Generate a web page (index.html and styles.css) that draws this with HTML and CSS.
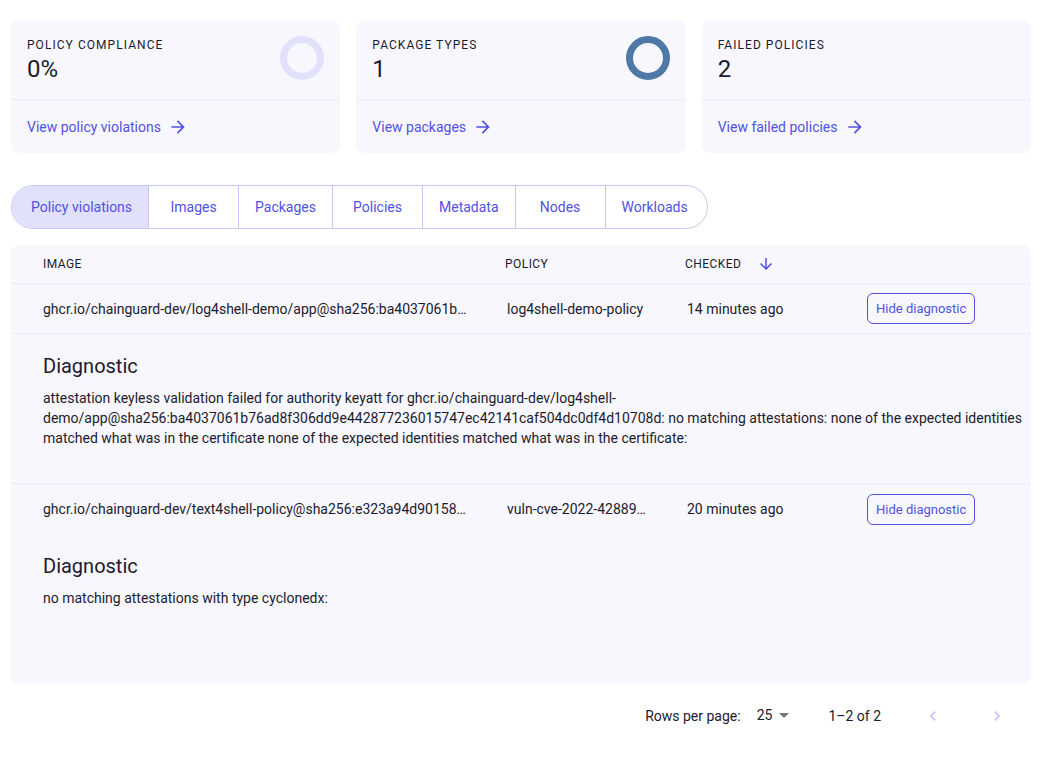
FILE: index.html
```html
<!DOCTYPE html>
<html>
<head>
<meta charset="utf-8">
<link rel="stylesheet" href="styles.css">
</head>
<body>
<div class="page">
  <div class="cards">
    <div class="card">
      <div class="card-top">
        <div>
          <div class="card-label">POLICY COMPLIANCE</div>
          <div class="card-value">0%</div>
        </div>
        <svg class="donut" width="44" height="44" viewBox="0 0 44 44"><circle cx="22" cy="22" r="18.5" fill="none" stroke="#e1e1fc" stroke-width="7"/></svg>
      </div>
      <div class="card-foot">
        <a class="card-link">View policy violations <svg class="arrow" width="20" height="20" viewBox="0 0 24 24"><path d="M12 4l-1.41 1.41L16.17 11H4v2h12.17l-5.58 5.59L12 20l8-8z"/></svg></a>
      </div>
    </div>
    <div class="card">
      <div class="card-top">
        <div>
          <div class="card-label">PACKAGE TYPES</div>
          <div class="card-value">1</div>
        </div>
        <svg class="donut" width="44" height="44" viewBox="0 0 44 44"><circle cx="22" cy="22" r="18.5" fill="none" stroke="#4e79a7" stroke-width="7"/></svg>
      </div>
      <div class="card-foot">
        <a class="card-link">View packages <svg class="arrow" width="20" height="20" viewBox="0 0 24 24"><path d="M12 4l-1.41 1.41L16.17 11H4v2h12.17l-5.58 5.59L12 20l8-8z"/></svg></a>
      </div>
    </div>
    <div class="card">
      <div class="card-top">
        <div>
          <div class="card-label">FAILED POLICIES</div>
          <div class="card-value">2</div>
        </div>
      </div>
      <div class="card-foot">
        <a class="card-link">View failed policies <svg class="arrow" width="20" height="20" viewBox="0 0 24 24"><path d="M12 4l-1.41 1.41L16.17 11H4v2h12.17l-5.58 5.59L12 20l8-8z"/></svg></a>
      </div>
    </div>
  </div>

  <div class="tabs">
    <div class="tab active">Policy violations</div>
    <div class="tab">Images</div>
    <div class="tab">Packages</div>
    <div class="tab">Policies</div>
    <div class="tab">Metadata</div>
    <div class="tab">Nodes</div>
    <div class="tab">Workloads</div>
  </div>

  <div class="table">
    <div class="row head">
      <div class="c1">IMAGE</div>
      <div class="c2">POLICY</div>
      <div class="c3">CHECKED <svg class="sort" width="18" height="18" viewBox="0 0 24 24"><path d="m20 12-1.41-1.41L13 16.17V4h-2v12.17l-5.58-5.59L4 12l8 8z"/></svg></div>
      <div class="c4"></div>
    </div>
    <div class="row body">
      <div class="c1"><span class="trunc">ghcr.io/chainguard-dev/log4shell-demo/app@sha256:ba4037061b76ad8f306dd9e442877236015747ec42141caf504dc0df4d10708d</span></div>
      <div class="c2"><span class="trunc">log4shell-demo-policy</span></div>
      <div class="c3">14 minutes ago</div>
      <div class="c4"><button class="btn">Hide diagnostic</button></div>
    </div>
    <div class="diag bordered">
      <h2>Diagnostic</h2>
      <p>attestation keyless validation failed for authority keyatt for ghcr.io/chainguard-dev/log4shell-demo/app@sha256:ba4037061b76ad8f306dd9e442877236015747ec42141caf504dc0df4d10708d: no matching attestations: none of the expected identities matched what was in the certificate none of the expected identities matched what was in the certificate:</p>
    </div>
    <div class="row body noborder">
      <div class="c1"><span class="trunc">ghcr.io/chainguard-dev/text4shell-policy@sha256:e323a94d901580bbd0a4e1a6e6f3e8d5b6c1a1f40b2a4f3e9c58d16c42a7e1f0</span></div>
      <div class="c2"><span class="trunc">vuln-cve-2022-42889-policy</span></div>
      <div class="c3">20 minutes ago</div>
      <div class="c4"><button class="btn">Hide diagnostic</button></div>
    </div>
    <div class="diag">
      <h2>Diagnostic</h2>
      <p>no matching attestations with type cyclonedx:</p>
    </div>
  </div>

  <div class="pager">
    <span class="rpp">Rows per page:</span>
    <span class="select">25 <svg width="24" height="24" viewBox="0 0 24 24"><path d="M7 10l5 5 5-5z"/></svg></span>
    <span class="count">1–2 of 2</span>
    <span class="nav"><svg width="24" height="24" viewBox="0 0 24 24"><path d="M15.41 7.41 14 6l-6 6 6 6 1.41-1.41L10.83 12z"/></svg></span>
    <span class="nav"><svg width="24" height="24" viewBox="0 0 24 24"><path d="M10 6 8.59 7.41 13.17 12l-4.58 4.59L10 18l6-6z"/></svg></span>
  </div>
</div>
</body>
</html>
```

FILE: styles.css
```css
* { box-sizing: border-box; }
body {
  margin: 0;
  background: #ffffff;
  font-family: Roboto, "Liberation Sans", Arial, sans-serif;
  color: #1c1b2e;
}
.page {
  width: 1020px;
  margin-left: 11px;
  padding-top: 20px;
}
.cards {
  display: grid;
  grid-template-columns: 1fr 1fr 1fr;
  gap: 16px;
}
.card {
  background: #f7f7fd;
  border-radius: 8px;
}
.card-top {
  display: flex;
  justify-content: space-between;
  align-items: flex-start;
  padding: 15px 16px 15px 16px;
  border-bottom: 1px solid #ececf8;
  height: 80px;
}
.donut { margin-top: 1px; }
.card-label {
  font-size: 12px;
  letter-spacing: 1.05px;
  line-height: 20px;
  color: #1c1b2e;
}
.card-value {
  font-size: 24px;
  line-height: 28px;
}
.card-foot {
  height: 53px;
  display: flex;
  align-items: center;
  padding: 0 16px;
}
.card-link {
  font-size: 14px;
  color: #5152e2;
  display: flex;
  align-items: center;
  gap: 7px;
}
.arrow { fill: #5152e2; }

.tabs {
  display: inline-flex;
  margin-top: 32px;
  border: 1px solid #c6c6f7;
  border-radius: 22px;
  overflow: hidden;
  height: 44px;
}
.tab {
  font-size: 14px;
  color: #5152e2;
  display: flex;
  align-items: center;
  justify-content: center;
  min-width: 90px;
  padding: 0 16px;
  border-left: 1px solid #c6c6f7;
}
.tab:first-child { border-left: none; padding: 0 16px 0 19px; }
.tab:last-child { padding: 0 19px 0 16px; }
.tab.active { background: #e1e1fc; }

.table {
  margin-top: 16px;
  background: #f7f7fd;
  border-radius: 8px;
}
.row {
  display: grid;
  grid-template-columns: 478px 180px 182px 1fr;
  align-items: center;
  border-bottom: 1px solid #ececf8;
}
.row.head { height: 39px; font-size: 12px; letter-spacing: 0.45px; }
.row.body { height: 50px; font-size: 14px; }
.row.noborder { border-bottom: none; }
.c1 { padding: 0 20px 0 32px; min-width: 0; }
.c2 { padding: 0 22px 0 16px; min-width: 0; }
.c3 { padding-left: 16px; display: flex; align-items: center; }
.c4 { padding-left: 16px; }
.body .c2, .body .c3 { padding-left: 18px; }
.trunc {
  display: block;
  overflow: hidden;
  white-space: nowrap;
  text-overflow: ellipsis;
}
.sort { fill: #5152e2; margin-left: 16px; }
.btn {
  font-family: Roboto, "Liberation Sans", Arial, sans-serif;
  font-size: 13px;
  color: #5152e2;
  background: transparent;
  border: 1px solid #5152e2;
  border-radius: 6px;
  height: 31px;
  padding: 0 8px;
}
.diag {
  height: 150px;
  padding: 20px 6px 0 32px;
}
.diag.bordered { border-bottom: 1px solid #ececf8; }
.diag h2 {
  margin: 0 0 10px 0;
  font-size: 20px;
  font-weight: 400;
  line-height: 24px;
}
.diag p {
  margin: 0;
  font-size: 14px;
  line-height: 20px;
}
.pager {
  height: 64px;
  display: flex;
  align-items: center;
  justify-content: flex-end;
  font-size: 14px;
  padding-right: 14px;
}
.rpp { margin-right: 16px; }
.select {
  display: flex;
  align-items: center;
  margin-right: 32px;
  padding-bottom: 2px;
}
.select svg { fill: #757575; }
.count { margin-right: 8px; }
.nav {
  width: 40px;
  height: 40px;
  display: flex;
  align-items: center;
  justify-content: center;
  margin-left: 24px;
}
.nav svg { fill: #c6c6f7; width: 20px; height: 20px; }
```
